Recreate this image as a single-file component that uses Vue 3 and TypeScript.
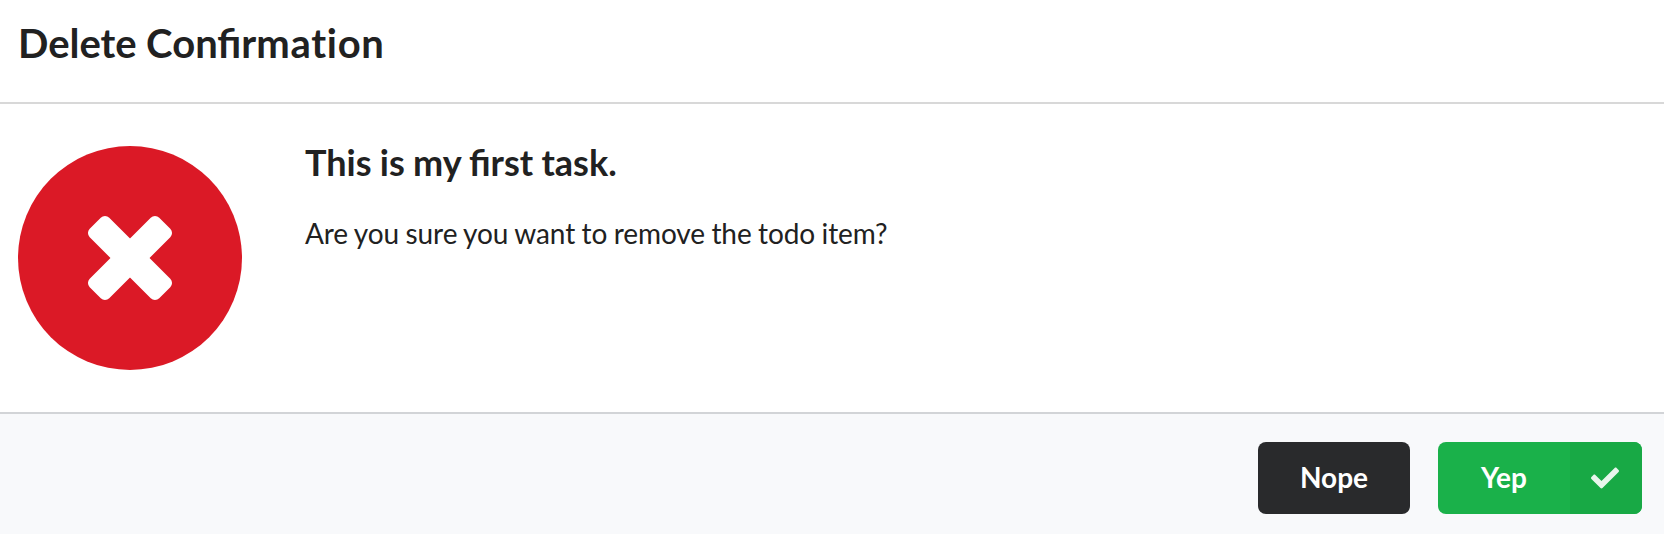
<script setup lang="ts">
const task: string = 'This is my first task.'
const question: string = 'Are you sure you want to remove the todo item?'
</script>

<template>
  <div class="modal">
    <header class="header">Delete Confir<span class="plain">mation</span></header>
    <main class="content">
      <div class="icon">
        <svg viewBox="-42 -42 84 84" width="84" height="84" fill="#fff" aria-hidden="true">
          <rect x="-13.8" y="-49.15" width="27.6" height="98.3" rx="6" transform="rotate(45)" />
          <rect x="-13.8" y="-49.15" width="27.6" height="98.3" rx="6" transform="rotate(-45)" />
        </svg>
      </div>
      <div class="description">
        <h3>{{ task }}</h3>
        <p>{{ question }}</p>
      </div>
    </main>
    <footer class="actions">
      <button class="button deny" type="button">Nope</button>
      <button class="button approve" type="button">
        <span class="label">Yep</span>
        <span class="check">
          <svg viewBox="0 0 512 512" width="28" height="28" aria-hidden="true">
            <path d="M173.898 439.404l-166.4-166.4c-9.997-9.997-9.997-26.206 0-36.204l36.203-36.204c9.997-9.998 26.207-9.998 36.204 0L192 312.69 432.095 72.596c9.997-9.997 26.207-9.997 36.204 0l36.203 36.204c9.997 9.997 9.997 26.206 0 36.204l-294.4 294.401c-9.998 9.997-26.207 9.997-36.204-.001z" fill="currentColor" />
          </svg>
        </span>
      </button>
    </footer>
  </div>
</template>

<style scoped>
.modal {
  box-sizing: border-box;
  width: 100%;
  height: 534px;
  display: flex;
  flex-direction: column;
  background: #fff;
  color: #212121;
  font-family: Lato, 'Liberation Sans', sans-serif;
  overflow: hidden;
}
.header {
  box-sizing: border-box;
  height: 104px;
  padding: 18px 18px 0;
  border-bottom: 2px solid #d8d8d8;
  font-size: 40px;
  font-weight: 700;
  line-height: 51px;
  word-spacing: -0.3px;
}
.plain {
  font-variant-ligatures: none;
  letter-spacing: 0.7px;
}
.content {
  box-sizing: border-box;
  height: 308px;
  flex: none;
  display: flex;
  gap: 63px;
  padding: 42px 18px 0;
}
.icon {
  width: 224px;
  height: 224px;
  flex: none;
  display: flex;
  align-items: center;
  justify-content: center;
  border-radius: 50%;
  background: #db1926;
}
.icon svg {
  overflow: visible;
}
h3 {
  margin: 0;
  font-size: 36px;
  line-height: 32px;
  font-weight: 700;
  word-spacing: -0.5px;
}
p {
  margin: 35px 0 0;
  font-size: 28px;
  line-height: 40px;
  letter-spacing: -0.09px;
  word-spacing: -0.6px;
}
.actions {
  box-sizing: border-box;
  flex: 1;
  display: flex;
  justify-content: flex-end;
  gap: 28px;
  padding: 28px 22px 0;
  background: #f8f9fb;
  border-top: 2px solid #d2d4d7;
}
.button {
  height: 72px;
  padding: 0 0 2px;
  border: 0;
  border-radius: 8px;
  color: #fff;
  font-family: inherit;
  font-size: 28px;
  font-weight: 700;
  line-height: 28px;
}
.deny {
  width: 152px;
  background: #292a2c;
}
.approve {
  width: 204px;
  padding: 0;
  display: flex;
  overflow: hidden;
  background: #1ab14a;
}
.label {
  width: 132px;
  line-height: 70px;
}
.check {
  box-sizing: border-box;
  width: 72px;
  height: 72px;
  padding-right: 2px;
  display: flex;
  align-items: center;
  justify-content: center;
  background: #18a945;
  color: #e8f6ec;
}
</style>
